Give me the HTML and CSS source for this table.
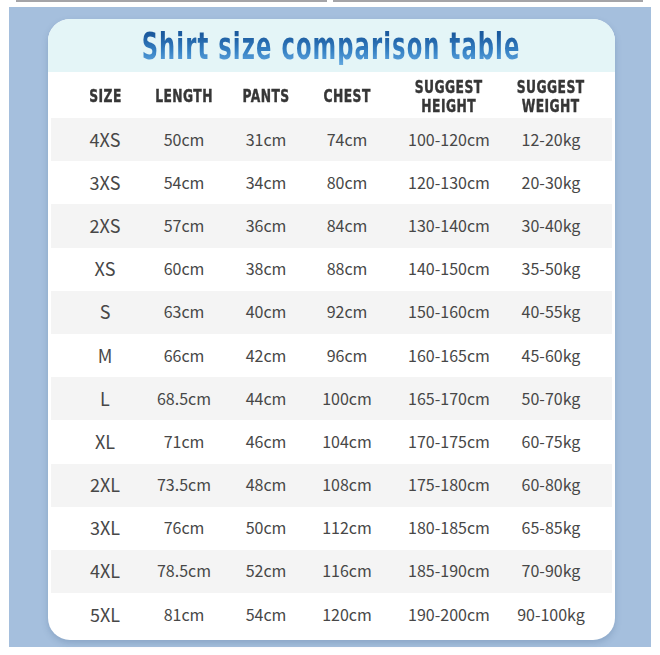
FILE: index.html
```html
<!DOCTYPE html>
<html lang="en">
<head>
<meta charset="utf-8">
<title>Shirt size comparison table</title>
<link rel="stylesheet" href="styles.css">
</head>
<body>
<div class="topbars"><div class="tb"></div><div class="tb"></div></div>
<div class="frame">
  <div class="card">
    <div class="head"><h1 class="title">Shirt size comparison table</h1></div>
    <div class="grid colhead">
      <div>SIZE</div><div>LENGTH</div><div>PANTS</div><div>CHEST</div><div>SUGGEST<br>HEIGHT</div><div>SUGGEST<br>WEIGHT</div>
    </div>
    <div class="grid row alt"><div>4XS</div><div>50cm</div><div>31cm</div><div>74cm</div><div>100-120cm</div><div>12-20kg</div></div>
    <div class="grid row"><div>3XS</div><div>54cm</div><div>34cm</div><div>80cm</div><div>120-130cm</div><div>20-30kg</div></div>
    <div class="grid row alt"><div>2XS</div><div>57cm</div><div>36cm</div><div>84cm</div><div>130-140cm</div><div>30-40kg</div></div>
    <div class="grid row"><div>XS</div><div>60cm</div><div>38cm</div><div>88cm</div><div>140-150cm</div><div>35-50kg</div></div>
    <div class="grid row alt"><div>S</div><div>63cm</div><div>40cm</div><div>92cm</div><div>150-160cm</div><div>40-55kg</div></div>
    <div class="grid row"><div>M</div><div>66cm</div><div>42cm</div><div>96cm</div><div>160-165cm</div><div>45-60kg</div></div>
    <div class="grid row alt"><div>L</div><div>68.5cm</div><div>44cm</div><div>100cm</div><div>165-170cm</div><div>50-70kg</div></div>
    <div class="grid row"><div>XL</div><div>71cm</div><div>46cm</div><div>104cm</div><div>170-175cm</div><div>60-75kg</div></div>
    <div class="grid row alt"><div>2XL</div><div>73.5cm</div><div>48cm</div><div>108cm</div><div>175-180cm</div><div>60-80kg</div></div>
    <div class="grid row"><div>3XL</div><div>76cm</div><div>50cm</div><div>112cm</div><div>180-185cm</div><div>65-85kg</div></div>
    <div class="grid row alt"><div>4XL</div><div>78.5cm</div><div>52cm</div><div>116cm</div><div>185-190cm</div><div>70-90kg</div></div>
    <div class="grid row"><div>5XL</div><div>81cm</div><div>54cm</div><div>120cm</div><div>190-200cm</div><div>90-100kg</div></div>
  </div>
</div>
</body>
</html>
```

FILE: styles.css
```css
html, body {
  margin: 0;
  padding: 0;
  background: #ffffff;
}
body {
  width: 660px;
  height: 655px;
  font-family: "Noto Sans CJK SC", "Noto Sans", sans-serif;
}
.topbars {
  display: flex;
  gap: 6px;
  padding: 0 17px 0 16px;
  height: 7px;
}
.tb {
  flex: 1;
  height: 2px;
  background: #a4a4a8;
}
.frame {
  margin-left: 9px;
  width: 642px;
  height: 640px;
  box-sizing: border-box;
  background: #a5bfdd;
  padding: 12px 36px 7px 39px;
}
.card {
  width: 567px;
  height: 621px;
  background: #ffffff;
  border-radius: 22px;
  overflow: hidden;
  box-shadow: 0 3px 6px rgba(60, 90, 130, 0.25);
}
.head {
  height: 53px;
  background: #e4f5f7;
  display: flex;
  align-items: center;
  justify-content: center;
  padding-top: 2px;
  box-sizing: border-box;
}
.title {
  margin: 0;
  font-family: "DejaVu Sans Condensed", "DejaVu Sans", sans-serif;
  font-weight: 700;
  font-size: 35px;
  letter-spacing: 1.5px;
  line-height: 1;
  white-space: nowrap;
  transform: scale(0.72, 1.05);
  background: linear-gradient(to bottom, #1b5a9e 18%, #3681c4 62%, #62a8e0 100%);
  -webkit-background-clip: text;
  background-clip: text;
  color: transparent;
}
.grid {
  display: grid;
  grid-template-columns: 74px 84px 80px 82px 122px 82px;
  padding-left: 20px;
  align-items: center;
  justify-items: center;
  text-align: center;
}
.colhead {
  height: 46px;
  font-family: "DejaVu Sans Condensed", "DejaVu Sans", sans-serif;
  font-weight: 700;
  font-size: 18px;
  line-height: 19px;
  color: #363636;
  padding-top: 1px;
  box-sizing: border-box;
}
.colhead > div {
  transform: scaleX(0.76);
  letter-spacing: 0.6px;
  white-space: nowrap;
  -webkit-text-stroke: 0.4px #363636;
}
.row {
  height: 43.2px;
  margin: 0 3px;
  padding-left: 17px;
  padding-bottom: 2px;
  box-sizing: border-box;
  font-size: 16px;
  color: #474747;
}
.row > div:first-child {
  font-size: 18px;
}
.row.alt {
  background: #f4f4f4;
}
```
